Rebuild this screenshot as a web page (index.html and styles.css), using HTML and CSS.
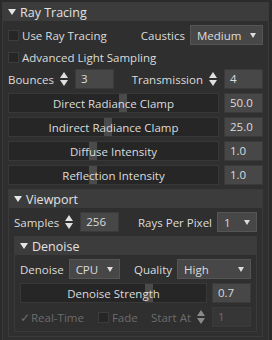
FILE: index.html
```html
<!DOCTYPE html>
<html lang="en">
<head>
	<meta charset="UTF-8">
	<title>Ray Tracing</title>
	<link rel="stylesheet" href="styles.css">
</head>
<body>

	<div class="panel outer">
		<div class="head"><span class="tri"></span>Ray Tracing</div>
		<div class="body">
			<div class="row">
				<span class="check"></span><span class="lbl">Use Ray Tracing</span>
				<span class="lbl push">Caustics</span>
				<div class="drop w72">Medium<span class="tri"></span></div>
			</div>
			<div class="row short">
				<span class="check"></span><span class="lbl">Advanced Light Sampling</span>
			</div>
			<div class="row">
				<span class="lbl">Bounces</span>
				<span class="spin"></span>
				<div class="num w38">3</div>
				<span class="lbl push">Transmission</span>
				<span class="spin"></span>
				<div class="num w38">4</div>
			</div>
			<div class="row">
				<div class="slider"><span class="knob" style="left:110px"></span><span class="stxt">Direct Radiance Clamp</span></div>
				<div class="num w38">50.0</div>
			</div>
			<div class="row">
				<div class="slider"><span class="knob" style="left:95px"></span><span class="stxt">Indirect Radiance Clamp</span></div>
				<div class="num w38">25.0</div>
			</div>
			<div class="row">
				<div class="slider"><span class="knob" style="left:80px"></span><span class="stxt">Diffuse Intensity</span></div>
				<div class="num w38">1.0</div>
			</div>
			<div class="row">
				<div class="slider"><span class="knob" style="left:80px"></span><span class="stxt">Reflection Intensity</span></div>
				<div class="num w38">1.0</div>
			</div>

			<div class="panel">
				<div class="head"><span class="tri"></span>Viewport</div>
				<div class="body">
					<div class="row">
						<span class="lbl">Samples</span>
						<span class="spin"></span>
						<div class="num w38">256</div>
						<span class="lbl push">Rays Per Pixel</span>
						<div class="drop w39">1<span class="tri"></span></div>
					</div>

					<div class="panel">
						<div class="head"><span class="tri"></span>Denoise</div>
						<div class="body">
							<div class="row">
								<span class="lbl">Denoise</span>
								<div class="drop w50">CPU<span class="tri"></span></div>
								<span class="lbl push">Quality</span>
								<div class="drop w73">High<span class="tri"></span></div>
							</div>
							<div class="row">
								<div class="slider"><span class="knob" style="left:124px"></span><span class="stxt">Denoise Strength</span></div>
								<div class="num w38">0.7</div>
							</div>
							<div class="row off">
								<span class="tick">&#10003;</span><span class="lbl">Real-Time</span>
								<span class="check fade"></span><span class="lbl">Fade</span>
								<span class="lbl push">Start At</span>
								<span class="spin"></span>
								<div class="num w38">1</div>
							</div>
						</div>
					</div>
				</div>
			</div>
		</div>
	</div>

</body>
</html>
```

FILE: styles.css
```css
html,body{ margin: 0;padding: 0; }
body{ background: #2b2b2b; color: #dcdcdc; font-family: "Open Sans", "Liberation Sans", sans-serif; font-size: 11.5px;
		padding: 2px 3px 0 2px; height: 340px; box-sizing: border-box; overflow: hidden; }

.panel{ border: 1px solid #3a3a3a; background: #2f2f2f; }
.head{ height: 18px; background: #3c3c3c; display: flex; align-items: center; font-size: 12.5px; color: #e2e2e2; padding-left: 5px; }
.head .tri{ margin-right: 4px; }
.body{ padding: 4px 5px 4px 5px; display: flex; flex-direction: column; gap: 4px; }

.row{ height: 20px; display: flex; align-items: center; }
.row.short{ height: 16px; }
.lbl{ white-space: nowrap; }
.push{ margin-left: auto; }

.tri{ display: inline-block; width: 0; height: 0; border-left: 4px solid transparent; border-right: 4px solid transparent;
		border-top: 6px solid #e6e6e6; }

.check{ width: 9px; height: 9px; background: #262626; border: 1px solid #3c3c3c; margin-right: 3px; }
.spin{ width: 9px; height: 14px; margin: 0 6px; position: relative; }
.spin:before, .spin:after{ content: ""; position: absolute; left: 0; border-left: 4.5px solid transparent; border-right: 4.5px solid transparent; }
.spin:before{ top: 0; border-bottom: 6px solid #e0e0e0; }
.spin:after{ bottom: 0; border-top: 6px solid #e0e0e0; }

.num{ height: 20px; box-sizing: border-box; background: #474747; border: 1px solid #3a3a3a; padding-left: 5px; line-height: 18px; }
.w38{ width: 39px; }

.drop{ height: 20px; box-sizing: border-box; background: #474747; border: 1px solid #555; padding: 0 6px; display: flex;
		align-items: center; justify-content: space-between; margin-left: 5px; }
.drop .tri{ border-left-width: 3.5px; border-right-width: 3.5px; border-top: 5px solid #dcdcdc; }
.w72{ width: 73px; }
.w39{ width: 40px; }
.w50{ width: 51px; }
.w73{ width: 74px; }

.slider{ flex: 1; height: 20px; box-sizing: border-box; background: #262626; border: 1px solid #383838; position: relative;
		margin-right: 5px; display: flex; align-items: center; justify-content: center; }
.knob{ position: absolute; top: 0; bottom: 0; width: 8px; background: #4b4b4b; }
.stxt{ position: relative; }

.off{ color: #6c6c6c; }
.off .tick{ margin-right: 1px; }
.off .fade{ margin-left: 14px; }
.off .spin:before{ border-bottom-color: #8a8a8a; }
.off .spin:after{ border-top-color: #8a8a8a; }
.off .num{ background: #363636; color: #6c6c6c; }
```
